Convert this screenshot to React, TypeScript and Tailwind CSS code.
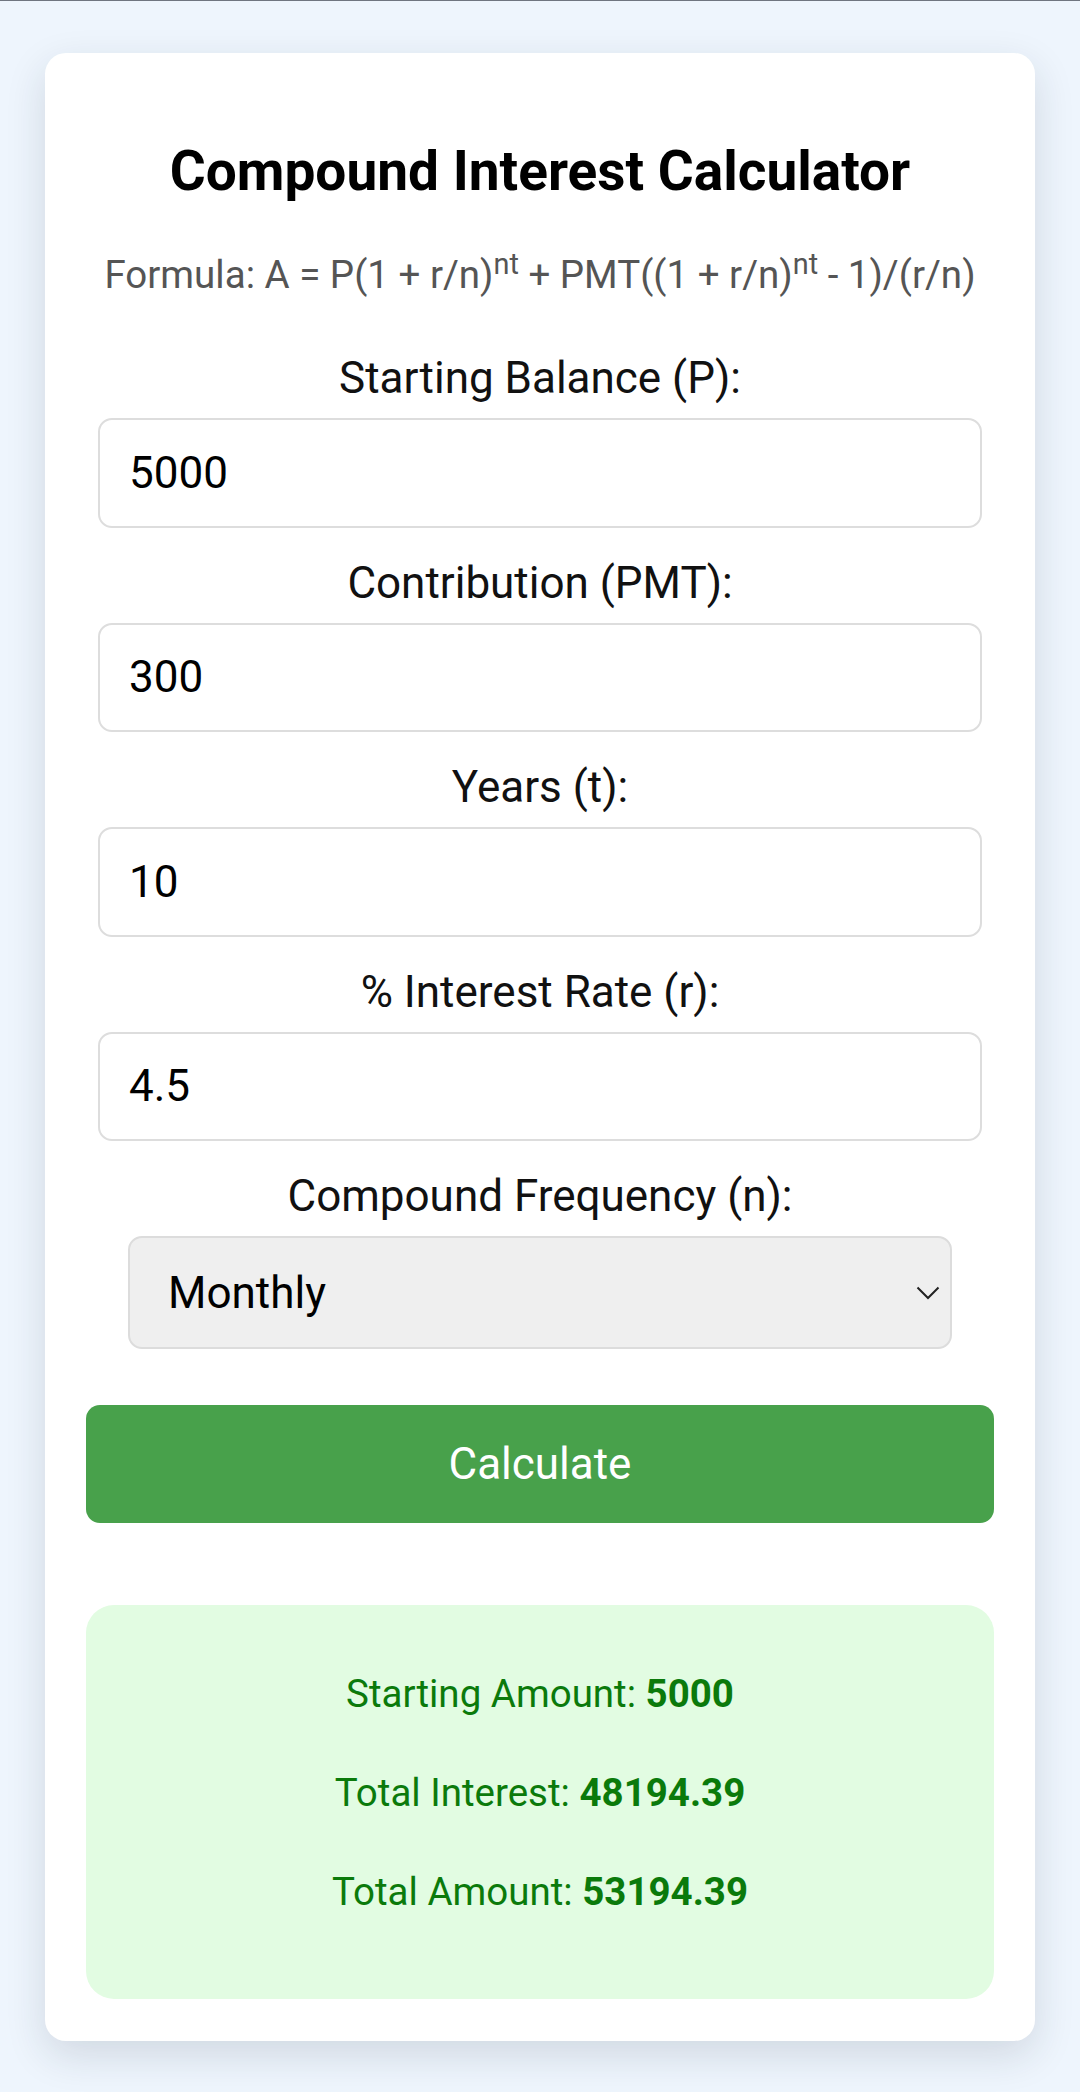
import { useState } from 'react'

interface FieldProps {
  label: string
  value: string
}

function Field({ label, value }: FieldProps) {
  const [val, setVal] = useState(value)
  return (
    <div className="flex flex-col">
      <label className="text-center text-[44px] leading-[52px] text-[#111]">{label}</label>
      <input
        type="number"
        value={val}
        onChange={(e) => setVal(e.target.value)}
        className="mx-[12px] mt-[14px] mb-[29px] h-[109.5px] rounded-[14px] border-[2px] border-[#dddddd] bg-white pl-[29px] text-[44px] text-black outline-none"
      />
    </div>
  )
}

export default function App() {
  return (
    <div
      className="min-h-screen w-full border-t border-[#6f7580] bg-[#eef5fd] pt-[52px] pb-[52px]"
      style={{ fontFamily: 'Roboto, "Liberation Sans", sans-serif' }}
    >
      <div className="mx-[45px] rounded-[21px] bg-white px-[41px] pt-[86px] pb-[42px] shadow-[0_14px_40px_rgba(30,40,60,0.14)]">
        <h1 className="text-center text-[55px] leading-[64px] font-bold text-black">
          Compound Interest Calculator
        </h1>
        <p className="mt-[49px] text-center text-[38.5px] leading-[46px] text-[#555]">
          Formula: A = P(1 + r/n)<sup>nt</sup> + PMT((1 + r/n)<sup>nt</sup> - 1)/(r/n)
        </p>

        <div className="mt-[54px]">
          <Field label="Starting Balance (P):" value="5000" />
          <Field label="Contribution (PMT):" value="300" />
          <Field label="Years (t):" value="10" />
          <Field label="% Interest Rate (r):" value="4.5" />

          <div className="flex flex-col">
            <label className="text-center text-[44px] leading-[52px] text-[#111]">
              Compound Frequency (n):
            </label>
            <div className="relative mx-[42px] mt-[14px]">
              <select
                defaultValue="12"
                className="h-[113px] w-full appearance-none rounded-[14px] border-[2px] border-[#dcdcdc] bg-[#efefef] pl-[38px] text-[44px] text-black outline-none"
              >
                <option value="1">Annually</option>
                <option value="4">Quarterly</option>
                <option value="12">Monthly</option>
                <option value="365">Daily</option>
              </select>
              <svg
                className="pointer-events-none absolute top-1/2 right-[12px] -translate-y-1/2"
                width="24"
                height="14"
                viewBox="0 0 24 14"
                fill="none"
              >
                <path d="M1.5 1.5 L12 12 L22.5 1.5" stroke="#222" strokeWidth="2" />
              </svg>
            </div>
          </div>
        </div>

        <button className="mt-[56px] h-[118px] w-full rounded-[14px] bg-[#48a14b] text-[44px] text-white">
          Calculate
        </button>

        <div className="mt-[82px] flex flex-col gap-[53px] rounded-[28px] bg-[#e2fce2] pt-[66px] pb-[84px] text-center text-[38.5px] leading-[46px] text-[#0b7a0b]">
          <p>
            Starting Amount: <strong className="font-bold">5000</strong>
          </p>
          <p>
            Total Interest: <strong className="font-bold">48194.39</strong>
          </p>
          <p>
            Total Amount: <strong className="font-bold">53194.39</strong>
          </p>
        </div>
      </div>
    </div>
  )
}
